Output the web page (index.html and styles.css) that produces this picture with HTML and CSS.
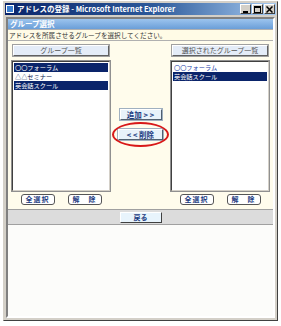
FILE: index.html
```html
<!DOCTYPE html>
<html lang="ja">
<head>
<meta charset="UTF-8">
<title>アドレスの登録</title>
<link rel="stylesheet" href="styles.css">
</head>
<body>
<div class="window">
    <div class="titlebar">
        <span class="app-icon"></span>
        <span class="title">アドレスの登録 - Microsoft Internet Explorer</span>
        <span class="ctrl">
            <span class="cbtn"><svg width="7" height="7"><rect x="1" y="5" width="5" height="2" fill="#000"/></svg></span>
            <span class="cbtn"><svg width="7" height="7"><rect x="0.5" y="0.5" width="6" height="6" fill="none" stroke="#000"/><rect x="0" y="0" width="7" height="2" fill="#000"/></svg></span>
            <span class="cbtn"><svg width="7" height="7"><path d="M0.5 0.5 L6.5 6.5 M6.5 0.5 L0.5 6.5" stroke="#000" stroke-width="1.5"/></svg></span>
        </span>
    </div>
    <div class="client">
        <div class="section-head">グループ選択</div>
        <div class="desc">アドレスを所属させるグループを選択してください。</div>
        <div class="main">
            <div class="col">
                <div class="col-head">グループ一覧</div>
                <ul class="listbox">
                    <li class="sel">〇〇フォーラム</li>
                    <li>△△セミナー</li>
                    <li class="sel">英会話スクール</li>
                </ul>
                <div class="btn-row">
                    <button class="small-btn">全選択</button>
                    <button class="small-btn">解　除</button>
                </div>
            </div>
            <div class="middle">
                <button class="move-btn">追加 &gt; &gt;</button>
                <div class="mark">
                    <button class="move-btn wide">&lt; &lt; 削除</button>
                    <span class="ring"></span>
                </div>
            </div>
            <div class="col">
                <div class="col-head">選択されたグループ一覧</div>
                <ul class="listbox">
                    <li class="plain">〇〇フォーラム</li>
                    <li class="sel">英会話スクール</li>
                </ul>
                <div class="btn-row">
                    <button class="small-btn">全選択</button>
                    <button class="small-btn">解　除</button>
                </div>
            </div>
        </div>
        <div class="footer">
            <button class="back-btn">戻る</button>
        </div>
        <div class="blank"></div>
    </div>
</div>
</body>
</html>
```
FILE: styles.css
```css
body {
    margin: 0;
    padding: 0;
    background: #fff;
    font-family: "Noto Sans CJK JP", "Liberation Sans", sans-serif;
}
.window {
    margin: 1px 2px 0 3px;
    width: 275px;
    height: 320px;
    border: 1px solid #404040;
    border-top-color: #d4d0c8;
    border-left-color: #d4d0c8;
    background: #d4d0c8;
    display: flex;
    flex-direction: column;
    box-sizing: border-box;
    padding: 1px;
}
.titlebar {
    height: 12px;
    background: linear-gradient(to right, #0a246a 0%, #2d5a9a 55%, #a6caf0 100%);
    display: flex;
    align-items: center;
    padding: 0 1px;
}
.app-icon {
    width: 8px;
    height: 8px;
    background: #3c7fd0;
    border: 1px solid #fff;
    box-sizing: border-box;
    margin-right: 3px;
}
.title {
    color: #fff;
    font-size: 7.5px;
    font-weight: bold;
    flex: 1;
    line-height: 12px;
    white-space: nowrap;
}
.ctrl {
    display: flex;
    gap: 1px;
}
.cbtn {
    width: 9px;
    height: 8px;
    background: #d4d0c8;
    border: 1px solid;
    border-color: #fff #404040 #404040 #fff;
    display: flex;
    align-items: center;
    justify-content: center;
}
.client {
    flex: 1;
    margin: 2px 1px 1px 1px;
    border: 2px solid;
    border-color: #808080 #fff #fff #808080;
    background: #fff;
    display: flex;
    flex-direction: column;
}
.section-head {
    height: 10px;
    background: linear-gradient(#9cc4ee, #6a9ed8);
    color: #fff;
    font-size: 7.5px;
    font-weight: bold;
    line-height: 10px;
    padding-left: 2px;
    border-bottom: 1px solid #b0b0b0;
}
.desc {
    height: 10px;
    background: #fffbe6;
    color: #333;
    font-size: 6.6px;
    line-height: 10px;
    padding-left: 1px;
    border-bottom: 1px solid #b0b0b0;
}
.main {
    background: #fffcec;
    display: flex;
    justify-content: space-between;
    padding: 4px 4px 4px 4px;
    height: 160px;
}
.col {
    width: 98px;
    display: flex;
    flex-direction: column;
    align-items: center;
}
.col-head {
    width: 94px;
    height: 9px;
    background: #e4ecf8;
    border: 1px solid;
    border-color: #fff #606060 #606060 #fff;
    box-shadow: 0 0 0 1px #a0a0a0;
    color: #555;
    font-size: 7px;
    line-height: 9px;
    text-align: center;
}
.listbox {
    list-style: none;
    margin: 5px 0 0 0;
    padding: 1px;
    width: 98px;
    height: 130px;
    box-sizing: border-box;
    background: #fff;
    border: 1px solid;
    border-color: #404040 #d4d0c8 #d4d0c8 #404040;
    box-shadow: 0 0 0 1px #909090;
}
.listbox li {
    font-size: 6.2px;
    line-height: 9px;
    height: 9px;
    color: #0a1a50;
    padding-left: 1px;
}
.listbox li.sel {
    background: #0a246a;
    color: #fff;
}
.listbox li.plain {
    color: #1a3ca8;
}
.btn-row {
    display: flex;
    gap: 13px;
    margin-top: 3px;
}
.small-btn,
.move-btn,
.back-btn {
    font-family: "Noto Sans CJK JP", "Liberation Sans", sans-serif;
    font-weight: bold;
    color: #1a3a80;
    cursor: pointer;
    padding: 0;
}
.small-btn {
    width: 34px;
    height: 11px;
    font-size: 7px;
    line-height: 9px;
    letter-spacing: 1px;
    background: #fff;
    border: 1px solid #555;
    border-radius: 3px;
}
.middle {
    display: flex;
    flex-direction: column;
    align-items: center;
    padding-top: 64px;
    gap: 9px;
}
.move-btn {
    width: 42px;
    height: 11px;
    font-size: 7.5px;
    line-height: 9px;
    background: #e8f2fa;
    border: 1px solid;
    border-color: #fff #506070 #506070 #fff;
    box-shadow: 0 0 0 1px #a0b0c0;
}
.move-btn.wide {
    width: 45px;
}
.mark {
    position: relative;
    display: flex;
}
.ring {
    position: absolute;
    left: -6px;
    top: -7px;
    width: 53px;
    height: 21px;
    border: 2px solid #d81818;
    border-radius: 50%;
}
.footer {
    height: 14px;
    background: #dcdcdc;
    border-top: 1px solid #a0a0a0;
    border-bottom: 1px solid #a0a0a0;
    display: flex;
    justify-content: center;
    align-items: center;
}
.back-btn {
    width: 42px;
    height: 11px;
    font-size: 7px;
    line-height: 9px;
    background: #e8f4fc;
    border: 1px solid;
    border-color: #fff #404040 #404040 #fff;
}
.blank {
    flex: 1;
    background: #fcfcfa;
}
```
